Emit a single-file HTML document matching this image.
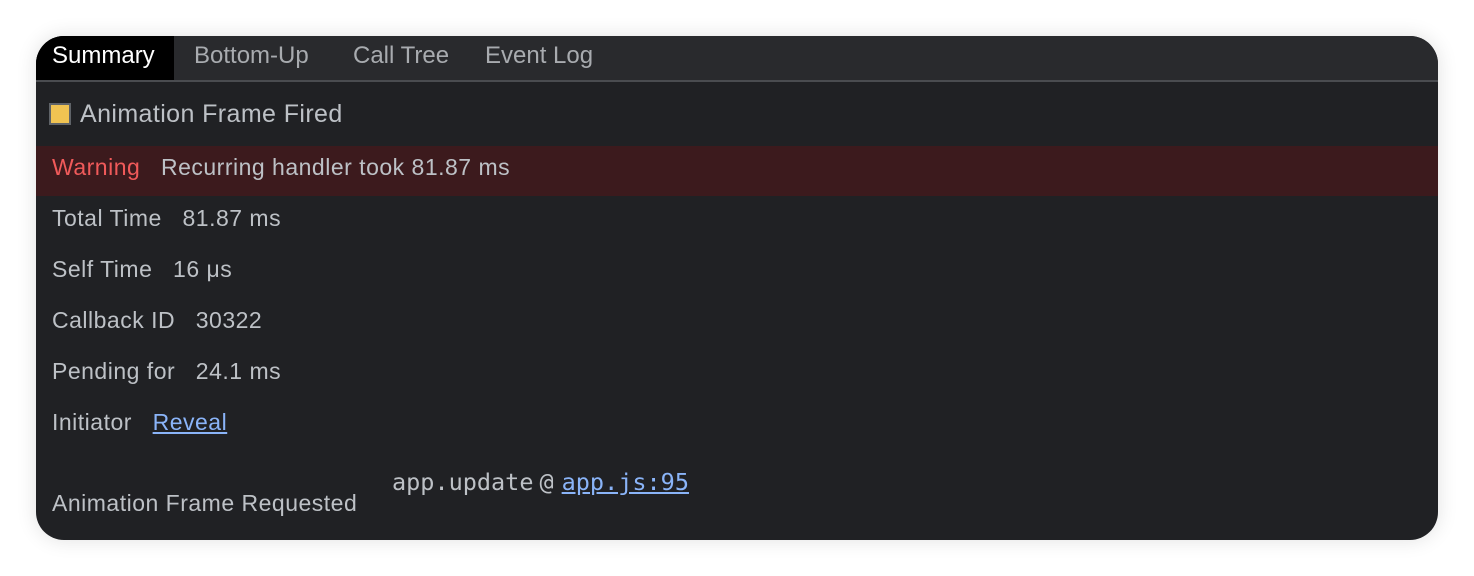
<!DOCTYPE html>
<html><head><style>
body{margin:0;width:1474px;height:576px;background:#fff;font-family:"Liberation Sans",sans-serif;position:relative;overflow:hidden}
.card{position:absolute;left:36px;top:36px;width:1402px;height:504px;background:#202124;border-radius:28px;overflow:hidden;box-shadow:0 0 20px rgba(0,0,0,0.12)}
.tabs{position:absolute;left:0;top:0;right:0;height:44px;background:#292a2d;border-bottom:2px solid #4a4c50}
.tab{position:absolute;top:0;height:44px;line-height:40px;font-size:24px;color:#a8abaf}
.t{position:absolute;font-size:23px;letter-spacing:0.5px;color:#bdc1c6;white-space:nowrap;line-height:26px}
a{color:#8ab4f8;text-decoration:underline}
</style></head><body>
<div class="card">
<div class="tabs">
<div class="tab" style="left:0;width:138px;background:#000;color:#fff;padding-left:16px;box-sizing:border-box">Summary</div>
<div class="tab" style="left:158px">Bottom-Up</div>
<div class="tab" style="left:317px">Call Tree</div>
<div class="tab" style="left:449px">Event Log</div>
</div>
<div style="position:absolute;left:13px;top:67px;width:22px;height:22px;background:#f0c352;border:2px solid #5f6368;box-sizing:border-box"></div>
<div class="t" style="left:44px;top:65px;font-size:25px;letter-spacing:0.4px">Animation Frame Fired</div>
<div style="position:absolute;left:0;top:110px;right:0;height:50px;background:#3c1a1d"></div>
<div class="t" style="left:16px;top:118px"><span style="color:#f05a5a">Warning</span>&nbsp;&nbsp; Recurring handler took 81.87 ms</div>
<div class="t" style="left:16px;top:169px">Total Time&nbsp;&nbsp; 81.87 ms</div>
<div class="t" style="left:16px;top:220px">Self Time&nbsp;&nbsp; 16 μs</div>
<div class="t" style="left:16px;top:271px">Callback ID&nbsp;&nbsp; 30322</div>
<div class="t" style="left:16px;top:322px">Pending for&nbsp;&nbsp; 24.1 ms</div>
<div class="t" style="left:16px;top:373px">Initiator&nbsp;&nbsp; <a>Reveal</a></div>
<div class="t" style="left:16px;top:454px">Animation Frame Requested</div>
<div class="t" style="left:356px;top:433px;font-family:'DejaVu Sans Mono','Liberation Mono',monospace;font-size:23.5px;letter-spacing:0">app.update<span style="margin-left:6px">@</span><a style="margin-left:8px">app.js:95</a></div>
</div>
</body></html>
